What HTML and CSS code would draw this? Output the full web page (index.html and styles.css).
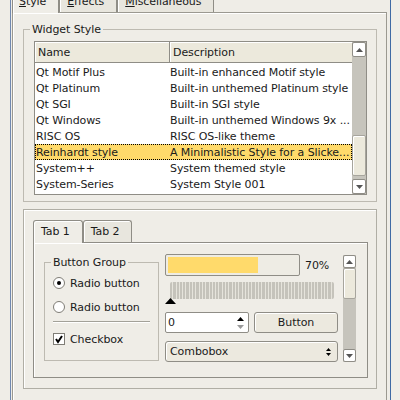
FILE: index.html
```html
<!DOCTYPE html>
<html lang="en">
<head>
    <meta charset="UTF-8">
    <meta name="viewport" content="width=device-width, initial-scale=1.0">
    <title>Style Settings</title>
    <link rel="stylesheet" href="styles.css">
</head>
<body>

    <div class="dialog">
        <!-- Main tabs -->
        <div class="tabs top-tabs">
            <div class="tab active first"><u>S</u>tyle</div>
            <div class="tab"><u>E</u>ffects</div>
            <div class="tab"><u>M</u>iscellaneous</div>
        </div>

        <div class="pane">
            <!-- Widget style list -->
            <fieldset class="group widget-style">
                <legend>Widget Style</legend>
                <div class="listview">
                    <div class="list-main">
                        <div class="header">
                            <div class="hcell name">Name</div>
                            <div class="hcell desc">Description</div>
                        </div>
                        <div class="rows">
                            <div class="row partial"><span class="cell name">Qt Motif</span><span class="cell desc">Built-in enhanced Motif style</span></div>
                            <div class="row"><span class="cell name">Qt Motif Plus</span><span class="cell desc">Built-in enhanced Motif style</span></div>
                            <div class="row"><span class="cell name">Qt Platinum</span><span class="cell desc">Built-in unthemed Platinum style</span></div>
                            <div class="row"><span class="cell name">Qt SGI</span><span class="cell desc">Built-in SGI style</span></div>
                            <div class="row"><span class="cell name">Qt Windows</span><span class="cell desc">Built-in unthemed Windows 9x ...</span></div>
                            <div class="row"><span class="cell name">RISC OS</span><span class="cell desc">RISC OS-like theme</span></div>
                            <div class="row selected"><span class="cell name">Reinhardt style</span><span class="cell desc">A Minimalistic Style for a Slicke...</span></div>
                            <div class="row"><span class="cell name">System++</span><span class="cell desc">System themed style</span></div>
                            <div class="row"><span class="cell name">System-Series</span><span class="cell desc">System Style 001</span></div>
                        </div>
                    </div>
                    <div class="vscroll list-scroll">
                        <div class="sb-btn"><svg width="7" height="4"><polygon points="0,4 3.5,0 7,4" fill="#555"/></svg></div>
                        <div class="sb-handle"></div>
                        <div class="sb-btn down"><svg width="7" height="4"><polygon points="0,0 3.5,4 7,0" fill="#555"/></svg></div>
                    </div>
                </div>
            </fieldset>

            <!-- Preview -->
            <div class="frame">
                <div class="tabs inner-tabs">
                    <div class="tab active">Tab 1</div>
                    <div class="tab">Tab 2</div>
                </div>
                <div class="inner-pane">
                    <fieldset class="group button-group">
                        <legend>Button Group</legend>
                        <div class="check-row">
                            <span class="radio on"></span>Radio button
                        </div>
                        <div class="check-row second">
                            <span class="radio"></span>Radio button
                        </div>
                        <div class="separator"></div>
                        <div class="check-row boxed">
                            <span class="checkbox"><svg width="10" height="10"><polyline points="2,5 4,8 8,2" fill="none" stroke="#000" stroke-width="2"/></svg></span>Checkbox
                        </div>
                    </fieldset>

                    <div class="controls">
                        <div class="progress-row">
                            <div class="progress">
                                <div class="progress-fill" style="width: 70%"></div>
                            </div>
                            <span class="percent">70%</span>
                        </div>
                        <div class="slider">
                            <div class="groove"></div>
                            <svg class="slider-handle" width="11" height="6"><polygon points="0,6 5.5,0 11,6" fill="#000"/></svg>
                        </div>
                        <div class="spin-row">
                            <div class="spinbox">
                                <span>0</span>
                                <span class="spin-arrows">
                                    <svg width="7" height="4"><polygon points="0,4 3.5,0 7,4" fill="#000"/></svg>
                                    <svg width="7" height="4"><polygon points="0,0 3.5,4 7,0" fill="#999"/></svg>
                                </span>
                            </div>
                            <div class="button">Button</div>
                        </div>
                        <div class="combobox">
                            <span>Combobox</span>
                            <svg width="5" height="8"><polygon points="0,3 2.5,0 5,3" fill="#000"/><polygon points="0,5 2.5,8 5,5" fill="#000"/></svg>
                        </div>
                    </div>

                    <div class="vscroll side-scroll">
                        <div class="sb-btn"><svg width="7" height="4"><polygon points="0,4 3.5,0 7,4" fill="#555"/></svg></div>
                        <div class="sb-handle"></div>
                        <div class="sb-btn down"><svg width="7" height="4"><polygon points="0,0 3.5,4 7,0" fill="#555"/></svg></div>
                    </div>
                </div>
            </div>
        </div>
    </div>

</body>
</html>
```

FILE: styles.css
```css
* {
    box-sizing: border-box;
}

body {
    margin: 0;
    height: 400px;
    overflow: hidden;
    background-color: #efede7;
    font-family: "DejaVu Sans", Verdana, sans-serif;
    font-size: 11px;
    line-height: 13px;
    letter-spacing: -0.08px;
    color: #1a1a1a;
}

.dialog {
    display: flow-root;
    margin-left: 10px;
    width: 381px;
    height: 400px;
    border-left: 1px solid #7088b0;
    border-right: 1px solid #3f6aa5;
}

/* Tabs */
.tabs {
    display: flex;
    align-items: flex-end;
}

.top-tabs {
    margin-top: -10px;
    padding-left: 1px;
}

.tab {
    padding: 4px 12px 4px 7px;
    border: 1px solid #8f8d86;
    border-bottom: none;
    border-radius: 3px 3px 0 0;
    background-color: #e8e6de;
    box-shadow: inset 1px 1px 0 #fff;
    white-space: nowrap;
}

.tab.first {
    padding-left: 6px;
}

.tab.active {
    position: relative;
    z-index: 1;
    margin-bottom: -1px;
    padding-bottom: 5px;
    background-color: #efede7;
}

.pane {
    margin: 0 3px 0 1px;
    padding: 10px 9px 20px 10px;
    height: 420px;
    border: 1px solid #9b9991;
    box-shadow: inset 1px 1px 0 #fff;
}

/* Group boxes */
.group {
    margin: 0;
    min-width: 0;
    border: 1px solid #bdbab1;
}

.group legend {
    padding: 0 2px;
    line-height: 13px;
}

.widget-style {
    padding: 5px 9px 6px 10px;
}

.widget-style legend {
    margin-left: -4px;
}

/* List view */
.listview {
    display: flex;
    height: 154px;
    border: 1px solid #8f8d86;
    background-color: #fff;
}

.list-main {
    flex: 1;
    display: flex;
    flex-direction: column;
    min-width: 0;
}

.header {
    display: flex;
    height: 21px;
    border-bottom: 1px solid #8f8d86;
}

.hcell {
    padding: 1px 0 0 3px;
    line-height: 19px;
    background-color: #ece9dc;
    box-shadow: inset 1px 1px 0 #fff;
}

.hcell.name {
    width: 135px;
    border-right: 1px solid #8f8d86;
}

.hcell.desc {
    flex: 1;
}

.rows {
    flex: 1;
    overflow: hidden;
}

.row {
    display: flex;
    height: 16px;
    padding-top: 1px;
    line-height: 15px;
    white-space: nowrap;
}

.row.partial {
    margin-top: -15px;
}

.row.selected {
    background-color: #ffda6b;
    outline: 1px dotted #000;
    outline-offset: -1px;
}

.cell {
    padding-left: 1px;
    overflow: hidden;
}

.cell.name {
    width: 134px;
    flex-shrink: 0;
}

.cell.desc {
    flex: 1;
}

/* Scroll bars */
.vscroll {
    display: flex;
    flex-direction: column;
    background-color: #c6c4bc;
}

.sb-btn {
    display: flex;
    align-items: center;
    justify-content: center;
    background-color: #fff;
    border: 1px solid #8f8d86;
    border-radius: 2px;
}

.sb-btn svg {
    display: block;
}

.sb-btn.down {
    margin-top: auto;
}

.sb-handle {
    background-color: #ece9dc;
    border: 1px solid #a7a59d;
    border-radius: 2px;
    box-shadow: inset 1px 1px 0 #fff;
}

.list-scroll {
    width: 14px;
}

.list-scroll .sb-btn {
    height: 15px;
}

.list-scroll .sb-handle {
    margin-top: 78px;
    height: 41px;
}

.side-scroll {
    width: 13px;
    height: 107px;
    margin: 1px 0 0 5px;
}

.side-scroll .sb-btn {
    height: 13px;
}

.side-scroll .sb-handle {
    height: 31px;
}

/* Preview frame */
.frame {
    margin-top: 7px;
    padding: 10px 8px 10px 9px;
    border: 1px solid #b0aea5;
    box-shadow: inset 1px 1px 0 #fff;
}

.inner-pane {
    display: flex;
    align-items: flex-start;
    padding: 11px 11px 15px 10px;
    border: 1px solid #8f8d86;
    box-shadow: inset 1px 1px 0 #fff;
}

.button-group {
    width: 115px;
    margin-top: 2px;
    padding: 6px 8px 13px 8px;
}

.button-group legend {
    margin-left: -2px;
}

.check-row {
    display: flex;
    align-items: center;
    gap: 5px;
    height: 16px;
    white-space: nowrap;
}

.check-row.second {
    margin-top: 8px;
}

.check-row.boxed {
    margin-top: 8px;
}

.radio {
    display: flex;
    align-items: center;
    justify-content: center;
    width: 12px;
    height: 12px;
    border: 1px solid #7f7d76;
    border-radius: 50%;
    background-color: #fff;
}

.radio.on::after {
    content: "";
    width: 4px;
    height: 4px;
    border-radius: 50%;
    background-color: #000;
}

.checkbox {
    width: 12px;
    height: 12px;
    border: 1px solid #7f7d76;
    background-color: #fff;
}

.checkbox svg {
    display: block;
}

.separator {
    margin-top: 6px;
    height: 2px;
    border-top: 1px solid #a3a199;
    border-bottom: 1px solid #fff;
}

/* Controls column */
.controls {
    width: 173px;
    margin-left: 6px;
}

.progress-row {
    display: flex;
    align-items: center;
    height: 22px;
}

.progress {
    width: 135px;
    height: 22px;
    padding: 2px;
    border: 1px solid #8f8d86;
    border-radius: 2px;
    background-color: #eeece4;
}

.progress-fill {
    height: 100%;
    background-color: #ffda6b;
}

.percent {
    margin-left: 5px;
}

.slider {
    position: relative;
    margin-top: 6px;
    height: 22px;
}

.groove {
    margin: 1px 4px 0 5px;
    height: 17px;
    border-radius: 2px;
    background: repeating-linear-gradient(90deg, #c5c3bb 0, #c5c3bb 2.3px, #e6e4dc 2.3px, #e6e4dc 3.3px);
}

.slider-handle {
    position: absolute;
    left: 0;
    top: 16px;
}

.spin-row {
    display: flex;
    gap: 5px;
    margin-top: 8px;
}

.spinbox {
    display: flex;
    align-items: center;
    justify-content: space-between;
    width: 84px;
    height: 21px;
    padding: 0 4px 0 2px;
    border: 1px solid #8f8d86;
    border-radius: 2px;
    background-color: #fff;
}

.spin-arrows {
    display: flex;
    flex-direction: column;
    gap: 4px;
}

.spin-arrows svg {
    display: block;
}

.button {
    width: 84px;
    height: 21px;
    line-height: 19px;
    text-align: center;
    border: 1px solid #8f8d86;
    border-radius: 3px;
    background-color: #ece9df;
    box-shadow: inset 1px 1px 0 #fff;
}

.combobox {
    display: flex;
    align-items: center;
    justify-content: space-between;
    margin-top: 8px;
    height: 21px;
    padding: 0 6px 0 4px;
    border: 1px solid #8f8d86;
    border-radius: 3px;
    background-color: #ece9df;
    box-shadow: inset 1px 1px 0 #fff;
}
```
